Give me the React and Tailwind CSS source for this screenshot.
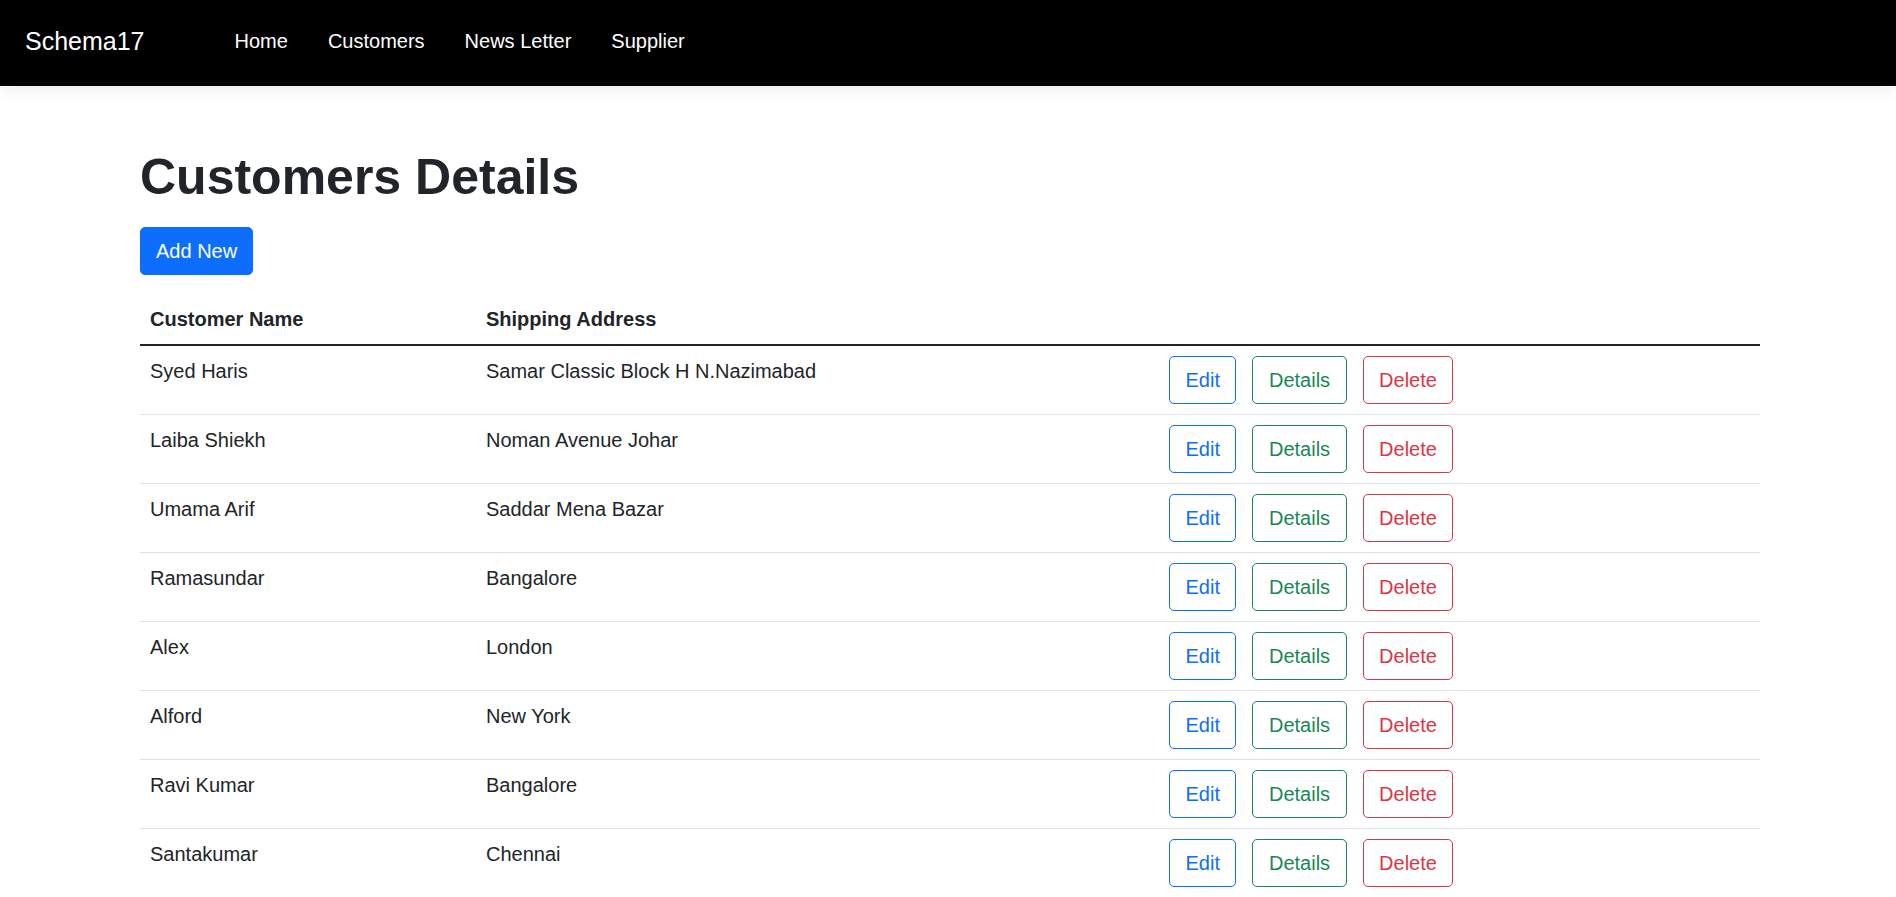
import React from "react";

const rows = [
  ["Syed Haris", "Samar Classic Block H N.Nazimabad"],
  ["Laiba Shiekh", "Noman Avenue Johar"],
  ["Umama Arif", "Saddar Mena Bazar"],
  ["Ramasundar", "Bangalore"],
  ["Alex", "London"],
  ["Alford", "New York"],
  ["Ravi Kumar", "Bangalore"],
  ["Santakumar", "Chennai"],
];

export default function App() {
  return (
    <div className="min-h-screen bg-white font-['Liberation_Sans',Arial,sans-serif] text-[#212529]">
      <nav className="relative z-10 flex h-[86px] items-center bg-black pl-[25px] pb-[4px] shadow-[0_5px_15px_rgba(0,0,0,0.06)]">
        <a className="text-[25px] leading-[30px] text-white">Schema17</a>
        <ul className="ml-[70px] flex">
          {["Home", "Customers", "News Letter", "Supplier"].map((l) => (
            <li key={l}>
              <a className="block px-[20px] text-[20px] leading-[30px] text-white">{l}</a>
            </li>
          ))}
        </ul>
      </nav>
      <main className="ml-[140px] w-[1620px]">
        <h1 className="mt-[61px] mb-[20px] text-[50px] font-bold leading-[60px]">Customers Details</h1>
        <p className="mb-[20px]">
          <a className="inline-block rounded-[5px] border border-[#0d6efd] bg-[#0d6efd] px-[15px] py-[8px] text-[20px] leading-[30px] text-white">
            Add New
          </a>
        </p>
        <table className="w-full border-collapse text-[20px] leading-[30px]">
          <thead>
            <tr className="border-b-2 border-[#212529]">
              <th className="w-[336px] px-[10px] pt-[9px] pb-[10px] text-left font-bold">Customer Name</th>
              <th className="w-[683px] px-[10px] pt-[9px] pb-[10px] text-left font-bold">Shipping Address</th>
              <th className="px-[10px] pt-[9px] pb-[10px]"></th>
            </tr>
          </thead>
          <tbody>
            {rows.map(([n, a]) => (
              <tr key={n} className="border-b border-[#dee2e6] align-top">
                <td className="px-[10px] py-[10px]">{n}</td>
                <td className="px-[10px] py-[10px]">{a}</td>
                <td className="px-[10px] py-[10px]">
                  <div className="flex gap-[16px]">
                    <a className="inline-block h-[48px] rounded-[5px] border border-[#0d6efd] px-[15.5px] py-[8px] text-[#0d6efd]">Edit</a>
                    <a className="inline-block h-[48px] rounded-[5px] border border-[#198754] px-[15.5px] py-[8px] text-[#198754]">Details</a>
                    <a className="inline-block h-[48px] rounded-[5px] border border-[#dc3545] px-[15.5px] py-[8px] text-[#dc3545]">Delete</a>
                  </div>
                </td>
              </tr>
            ))}
          </tbody>
        </table>
      </main>
    </div>
  );
}
